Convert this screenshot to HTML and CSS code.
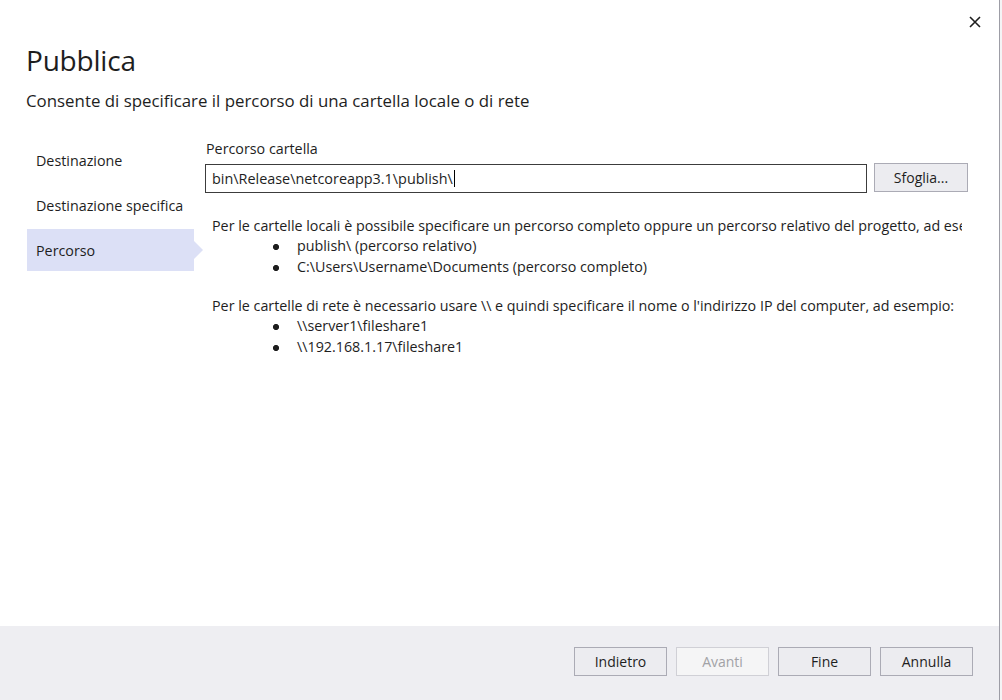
FILE: index.html
```html
<!DOCTYPE html>
<html lang="it">
<head>
<meta charset="utf-8">
<title>Pubblica</title>
<link rel="stylesheet" href="styles.css">
</head>
<body>
<div class="screen">
  <div class="dialog">
    <header class="header">
      <div class="titles">
        <h1 class="title">Pubblica</h1>
        <p class="subtitle">Consente di specificare il percorso di una cartella locale o di rete</p>
      </div>
      <button class="close" aria-label="Chiudi">
        <svg width="12" height="12" viewBox="0 0 12 12"><path d="M1 1 L11 11 M11 1 L1 11" stroke="#1e1e1e" stroke-width="1.6" fill="none"/></svg>
      </button>
    </header>
    <div class="main">
      <nav class="sidebar">
        <div class="nav-item">Destinazione</div>
        <div class="nav-item">Destinazione specifica</div>
        <div class="nav-item active">Percorso</div>
      </nav>
      <section class="content">
        <div class="label">Percorso cartella</div>
        <div class="path-row">
          <div class="input"><span>bin\Release\netcoreapp3.1\publish\</span><span class="caret"></span></div>
          <button class="btn browse">Sfoglia...</button>
        </div>
        <div class="help">
          <p class="para">Per le cartelle locali è possibile specificare un percorso completo oppure un percorso relativo del progetto, ad esempio:</p>
          <ul class="list">
            <li><span class="dot"></span>publish\ (percorso relativo)</li>
            <li><span class="dot"></span>C:\Users\Username\Documents (percorso completo)</li>
          </ul>
          <p class="para gap">Per le cartelle di rete è necessario usare \\ e quindi specificare il nome o l'indirizzo IP del computer, ad esempio:</p>
          <ul class="list">
            <li><span class="dot"></span>\\server1\fileshare1</li>
            <li><span class="dot"></span>\\192.168.1.17\fileshare1</li>
          </ul>
        </div>
      </section>
    </div>
    <footer class="footer">
      <button class="btn">Indietro</button>
      <button class="btn disabled">Avanti</button>
      <button class="btn">Fine</button>
      <button class="btn">Annulla</button>
    </footer>
  </div>
  <div class="edge"></div>
</div>
</body>
</html>
```
FILE: styles.css
```css
* { box-sizing: border-box; }
html, body { margin: 0; padding: 0; }
body {
  font-family: "Open Sans", "Noto Sans", sans-serif;
  color: #1e1e1e;
  background: #ffffff;
}
.screen {
  display: flex;
  width: 1002px;
  height: 700px;
  overflow: hidden;
}
.dialog {
  width: 1000px;
  height: 700px;
  flex-shrink: 0;
  border-right: 1px solid #9d9da6;
  background: #ffffff;
  display: flex;
  flex-direction: column;
}
.edge {
  width: 2px;
  height: 700px;
  background: #f4f4f6;
}
.header {
  display: flex;
  justify-content: space-between;
  align-items: flex-start;
  padding: 0 18px 0 26px;
  height: 139px;
}
.titles { padding-top: 40px; }
.title {
  margin: 0;
  font-weight: 400;
  font-size: 28px;
  line-height: 40px;
  letter-spacing: -0.2px;
}
.subtitle {
  margin: 10px 0 0;
  font-size: 16.85px;
  line-height: 22px;
}
.close {
  margin-top: 16px;
  width: 12px;
  height: 12px;
  padding: 0;
  border: 0;
  background: transparent;
  display: flex;
}
.main {
  flex: 1;
  display: flex;
}
.sidebar {
  width: 178px;
  flex-shrink: 0;
  margin-left: 27px;
  display: flex;
  flex-direction: column;
  gap: 3px;
}
.nav-item {
  height: 42px;
  width: 167px;
  display: flex;
  align-items: center;
  padding-left: 9px;
  font-size: 14.3px;
  position: relative;
}
.nav-item.active { background: #dce0f6; }
.nav-item.active::after {
  content: "";
  position: absolute;
  right: -9px;
  top: 12px;
  border-left: 9px solid #dce0f6;
  border-top: 9px solid transparent;
  border-bottom: 9px solid transparent;
}
.content {
  flex: 1;
  min-width: 0;
}
.label {
  font-size: 14.3px;
  line-height: 20px;
  padding-left: 1px;
}
.path-row {
  display: flex;
  gap: 7px;
  margin-top: 5px;
}
.input {
  width: 662px;
  flex-shrink: 0;
  height: 29px;
  border: 1px solid #3c3c3c;
  display: flex;
  align-items: center;
  padding-left: 6px;
  font-size: 14.4px;
}
.caret {
  display: inline-block;
  width: 1px;
  height: 17px;
  background: #000;
  margin-left: 1px;
}
.btn {
  width: 93px;
  height: 29px;
  flex-shrink: 0;
  border: 1px solid #ababb5;
  background: #ececf0;
  font-family: inherit;
  font-size: 14px;
  color: #1e1e1e;
  padding: 0;
}
.browse { width: 94px; margin-top: -1px; }
.help {
  width: 757px;
  overflow: hidden;
  padding-left: 7px;
  margin-top: 23px;
  font-size: 14.3px;
  line-height: 20px;
  white-space: nowrap;
}
.para { margin: 0; }
.para.gap { margin-top: 19px; }
.list {
  list-style: none;
  margin: 0;
  padding: 0 0 0 61px;
}
.list li {
  height: 20.5px;
  display: flex;
  align-items: center;
}
.dot {
  width: 24px;
  height: 6px;
  flex-shrink: 0;
  margin-top: 2px;
  background: radial-gradient(circle at 3px 3px, #1e1e1e 2.8px, transparent 3.2px);
}
.footer {
  height: 74px;
  background: #eeeef2;
  display: flex;
  justify-content: flex-end;
  gap: 9px;
  padding: 21px 26px 0 0;
}
.btn.disabled {
  background: #f5f5f6;
  border-color: #d0d0d6;
  color: #a2a2a6;
}
```
